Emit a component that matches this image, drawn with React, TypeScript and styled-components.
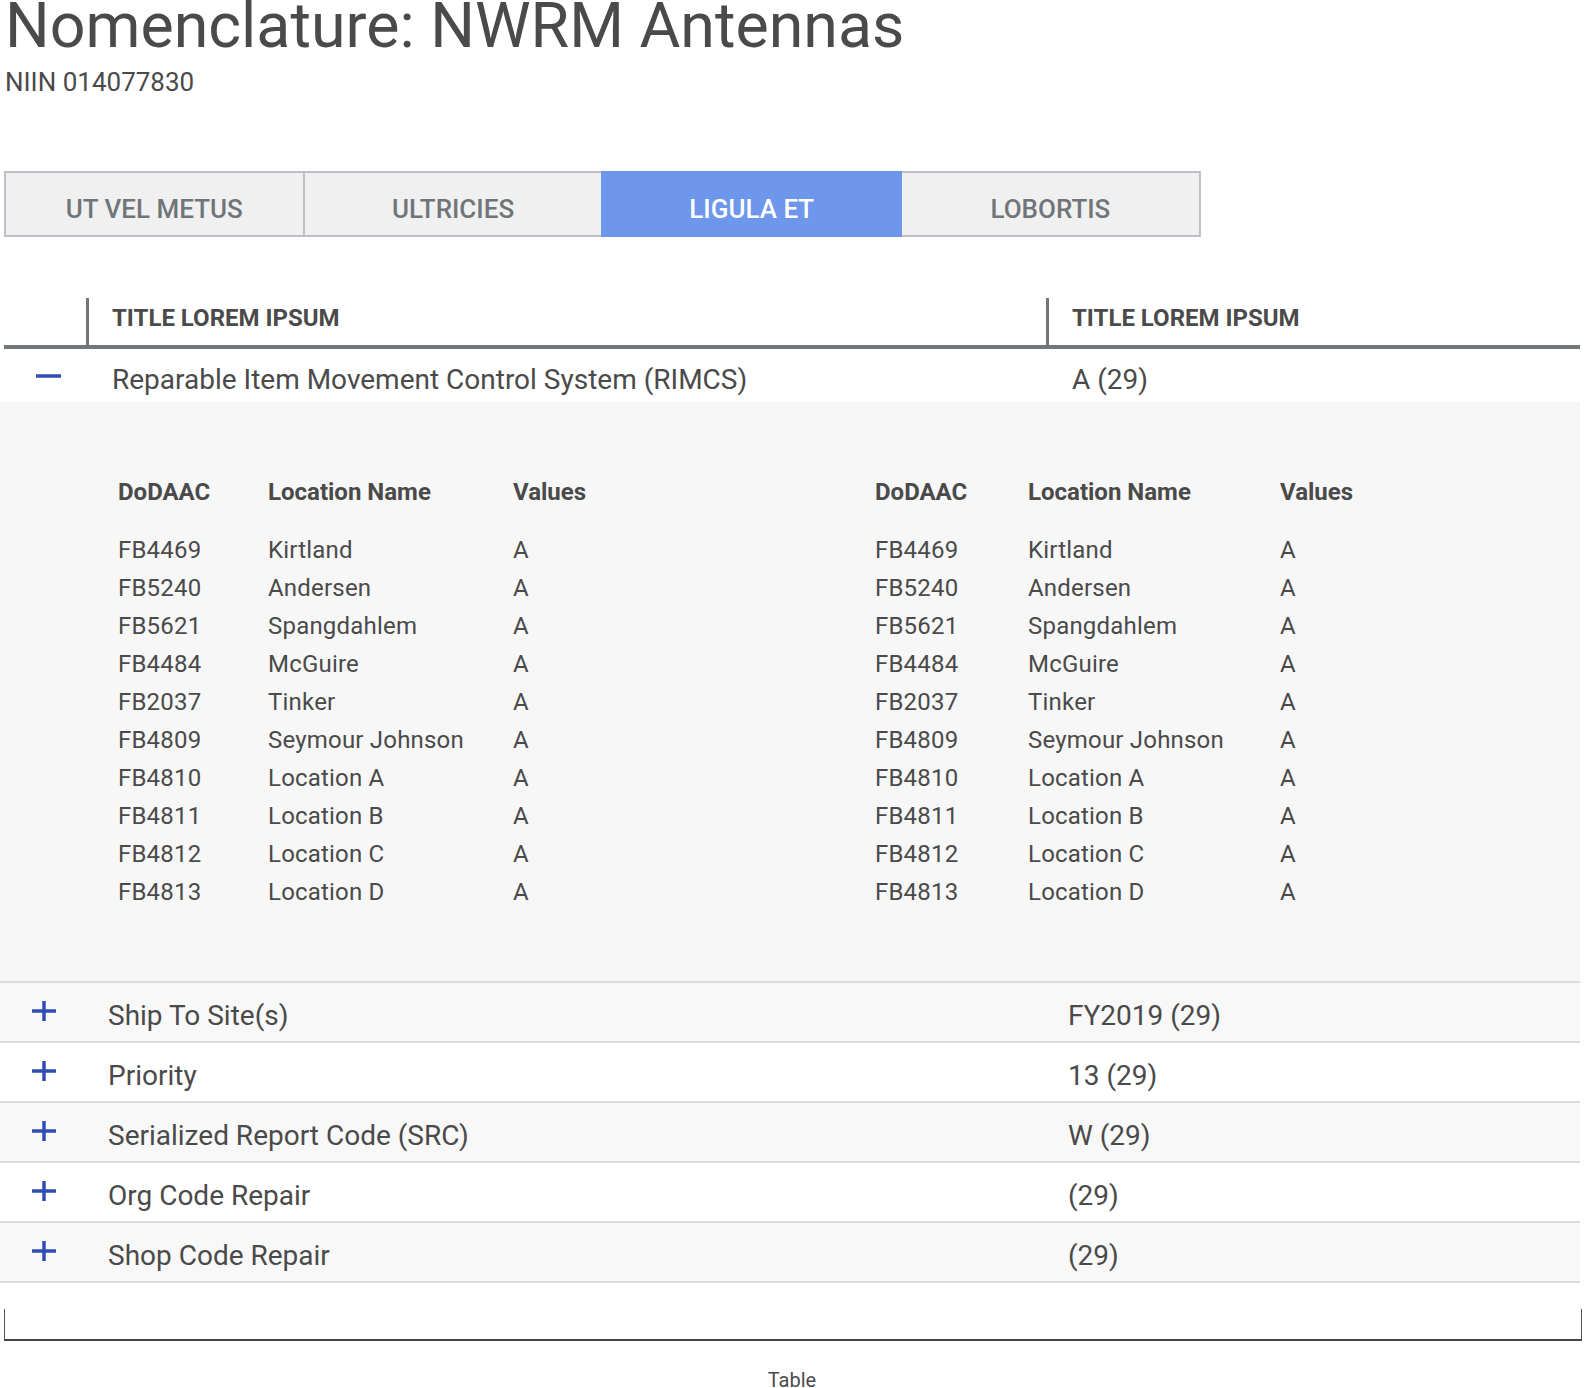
import React from 'react';
import styled, { createGlobalStyle } from 'styled-components';

const GlobalStyle = createGlobalStyle`
  body {
    margin: 0;
    background: #fff;
    font-family: Roboto, "Liberation Sans", Arial, sans-serif;
    color: #4a4a4a;
  }
`;

interface Site {
  code: string;
  name: string;
  value: string;
}

const sites: Site[] = [
  { code: 'FB4469', name: 'Kirtland', value: 'A' },
  { code: 'FB5240', name: 'Andersen', value: 'A' },
  { code: 'FB5621', name: 'Spangdahlem', value: 'A' },
  { code: 'FB4484', name: 'McGuire', value: 'A' },
  { code: 'FB2037', name: 'Tinker', value: 'A' },
  { code: 'FB4809', name: 'Seymour Johnson', value: 'A' },
  { code: 'FB4810', name: 'Location A', value: 'A' },
  { code: 'FB4811', name: 'Location B', value: 'A' },
  { code: 'FB4812', name: 'Location C', value: 'A' },
  { code: 'FB4813', name: 'Location D', value: 'A' },
];

const tabs = ['Ut vel metus', 'Ultricies', 'Ligula et', 'Lobortis'];

const collapsed = [
  { label: 'Ship To Site(s)', value: 'FY2019 (29)' },
  { label: 'Priority', value: '13 (29)' },
  { label: 'Serialized Report Code (SRC)', value: 'W (29)' },
  { label: 'Org Code Repair', value: '(29)' },
  { label: 'Shop Code Repair', value: '(29)' },
];

const PlusIcon = () => (
  <svg width="24" height="20" viewBox="0 0 24 20">
    <path d="M0 10H24M12 0V20" stroke="#2f4db5" strokeWidth="3.5" fill="none" />
  </svg>
);

const MinusIcon = () => (
  <svg width="25" height="4" viewBox="0 0 25 4">
    <path d="M0 2H25" stroke="#2f4db5" strokeWidth="3.5" fill="none" />
  </svg>
);

const SiteTable: React.FC<{ columns: string }> = ({ columns }) => (
  <InnerTable $columns={columns}>
    <InnerHead>DoDAAC</InnerHead>
    <InnerHead>Location Name</InnerHead>
    <InnerHead>Values</InnerHead>
    {sites.map((s) => (
      <React.Fragment key={s.code}>
        <InnerCell>{s.code}</InnerCell>
        <InnerCell>{s.name}</InnerCell>
        <InnerCell>{s.value}</InnerCell>
      </React.Fragment>
    ))}
  </InnerTable>
);

const App: React.FC = () => {
  return (
    <Page>
      <GlobalStyle />
      <Title>Nomenclature: NWRM Antennas</Title>
      <Subtitle>NIIN 014077830</Subtitle>

      <Tabs>
        {tabs.map((t) => (
          <Tab key={t} $active={t === 'Ligula et'}>
            {t}
          </Tab>
        ))}
      </Tabs>

      <HeaderRow>
        <HeaderSpacer />
        <HeaderCell>Title Lorem Ipsum</HeaderCell>
        <HeaderCell>Title Lorem Ipsum</HeaderCell>
      </HeaderRow>

      <Row $shift={4}>
        <IconCell $shift={4}>
          <MinusIcon />
        </IconCell>
        <Label>Reparable Item Movement Control System (RIMCS)</Label>
        <Label>A (29)</Label>
      </Row>

      <Panel>
        <SiteTable columns="150px 245px 1fr" />
        <SiteTable columns="153px 252px 1fr" />
      </Panel>

      {collapsed.map((c, i) => (
        <Row key={c.label} $shift={0} $shaded={i % 2 === 0} $divided>
          <IconCell $shift={0}>
            <PlusIcon />
          </IconCell>
          <Label>{c.label}</Label>
          <Label>{c.value}</Label>
        </Row>
      ))}

      <Frame />
      <Caption>Table</Caption>
    </Page>
  );
};

const Page = styled.div`
  width: 1584px;
`;

const Title = styled.h1`
  margin: -4px 0 0 5px;
  font-size: 62.7px;
  line-height: 60px;
  font-weight: 400;
  color: #4a4a4a;
  white-space: nowrap;
`;

const Subtitle = styled.div`
  margin: 11px 0 0 5px;
  font-size: 26px;
  line-height: 30px;
  color: #4a4a4a;
`;

const Tabs = styled.div`
  display: flex;
  margin: 74px 0 0 4px;
`;

const Tab = styled.div<{ $active?: boolean }>`
  box-sizing: border-box;
  width: 300.7px;
  height: 66px;
  display: flex;
  align-items: center;
  justify-content: center;
  padding-top: 9px;
  border: 2px solid ${(p) => (p.$active ? '#6e97ec' : '#bcc1c7')};
  background: ${(p) => (p.$active ? '#6e97ec' : '#f0f0f0')};
  color: ${(p) => (p.$active ? '#ffffff' : '#70757a')};
  font-size: 26px;
  font-weight: 500;
  text-transform: uppercase;
  position: relative;
  z-index: ${(p) => (p.$active ? 1 : 0)};

  & + & {
    margin-left: -2px;
  }
`;

const HeaderRow = styled.div`
  display: grid;
  grid-template-columns: 82px 960px 1fr;
  width: 1576px;
  margin: 61px 0 0 4px;
  height: 47px;
  border-bottom: 4px solid #73777c;
`;

const HeaderSpacer = styled.div``;

const HeaderCell = styled.div`
  border-left: 3px solid #73777c;
  padding: 6px 0 0 23px;
  font-size: 24px;
  line-height: 28px;
  font-weight: 700;
  text-transform: uppercase;
  color: #4a4a4a;
`;

const Row = styled.div<{ $shift: number; $shaded?: boolean; $divided?: boolean }>`
  box-sizing: border-box;
  display: grid;
  grid-template-columns: ${(p) => 108 + p.$shift}px 960px 1fr;
  align-items: center;
  width: 1580px;
  height: ${(p) => (p.$divided ? 60 : 53)}px;
  background: ${(p) => (p.$shaded ? '#f8f8f8' : '#ffffff')};
  border-bottom: ${(p) => (p.$divided ? '2px solid #dcdcdc' : 'none')};
`;

const IconCell = styled.div<{ $shift: number }>`
  display: flex;
  align-items: center;
  padding-left: ${(p) => 32 + p.$shift}px;
  height: 100%;
  padding-bottom: ${(p) => (p.$shift ? 0 : 2)}px;
  box-sizing: border-box;
`;

const Label = styled.div`
  font-size: 28px;
  line-height: 34px;
  padding-top: 8px;
  color: #4a4a4a;
  white-space: nowrap;
`;

const Panel = styled.div`
  box-sizing: border-box;
  width: 1580px;
  display: grid;
  grid-template-columns: 757px 1fr;
  padding: 71px 0 70px 118px;
  background: #f7f7f7;
  border-bottom: 2px solid #dcdcdc;
`;

const InnerTable = styled.div<{ $columns: string }>`
  display: grid;
  grid-template-columns: ${(p) => p.$columns};
  grid-template-rows: 57.5px;
  grid-auto-rows: 38px;
  align-items: center;
`;

const InnerHead = styled.div`
  font-size: 24px;
  line-height: 38px;
  font-weight: 700;
  color: #4a4a4a;
  align-self: start;
`;

const InnerCell = styled.div`
  font-size: 24px;
  line-height: 38px;
  color: #4a4a4a;
  letter-spacing: 0.2px;
`;

const Frame = styled.div`
  box-sizing: border-box;
  width: 1578px;
  height: 32px;
  margin: 26px 0 0 4px;
  border-left: 1px solid #555;
  border-right: 1px solid #555;
  border-bottom: 2px solid #444;
`;

const Caption = styled.div`
  margin-top: 29px;
  text-align: center;
  font-size: 20px;
  line-height: 20px;
  color: #4a4a4a;
`;

export default App;
